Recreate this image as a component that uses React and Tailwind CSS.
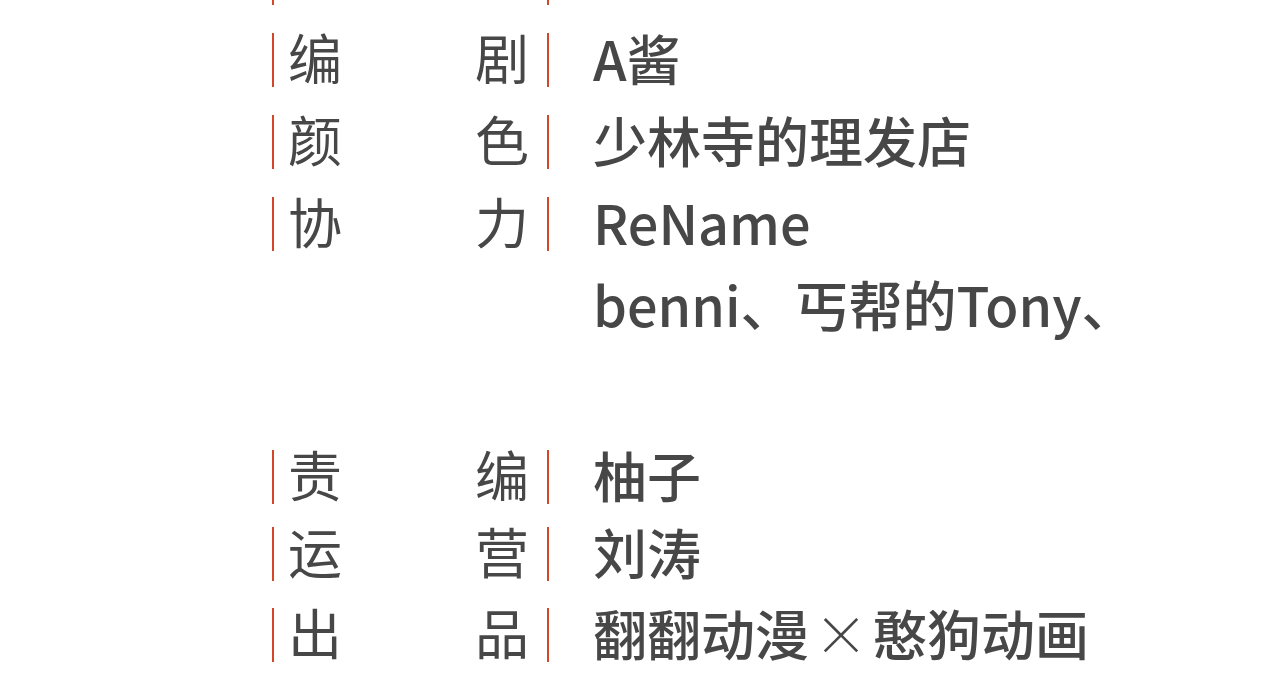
const credits = [
  { label: ['编', '剧'], lines: ['A酱'], h: 'h-[82px]' },
  { label: ['颜', '色'], lines: ['少林寺的理发店'], h: 'h-[82px]' },
  { label: ['协', '力'], lines: ['ReName', 'benni、丐帮的Tony、', ''], h: 'h-[246px]' },
];

const staff = [
  { label: ['责', '编'], lines: ['柚子'], h: 'h-[77px]' },
  { label: ['运', '营'], lines: ['刘涛'], h: 'h-[81px]' },
  {
    label: ['出', '品'],
    lines: [
      <>
        翻翻动漫<span className="font-light mx-[5px]">×</span>憨狗动画
      </>,
    ],
    h: 'h-[82px]',
  },
];

const Bar = () => <div className="w-[2px] h-[54px] bg-[#d4462a] shrink-0" />;

const Label = ({ chars }) => (
  <div className="h-[82px] flex items-center">
    <Bar />
    <div className="w-[273px] pl-[14px] pr-[18px] flex items-center justify-between">
      {chars ? (
        <>
          <span className="-mt-[8px]">{chars[0]}</span>
          <span className="-mt-[8px]">{chars[1]}</span>
        </>
      ) : null}
    </div>
    <Bar />
  </div>
);

const Row = ({ item }) => (
  <div className={`flex items-start ${item.h}`}>
    <Label chars={item.label} />
    <div className="ml-[44px] font-medium leading-[82px] -mt-[2px]">
      {item.lines.map((line, i) => (
        <div key={i} className="h-[82px] whitespace-nowrap">{line}</div>
      ))}
    </div>
  </div>
);

export default function App() {
  return (
    <div
      className="w-[1280px] h-[700px] overflow-hidden bg-white text-[#474747] text-[54px] font-normal"
      style={{ fontFamily: '"Noto Sans CJK SC", "Noto Sans", sans-serif' }}
    >
      <div className="pl-[272px] -mt-[63px]">
        {/* row cut off at the top */}
        <div className="h-[82px]">
          <Label />
        </div>

        {credits.map((item, i) => (
          <Row key={i} item={item} />
        ))}

        <div className="mt-[7px]">
          {staff.map((item, i) => (
            <Row key={i} item={item} />
          ))}
        </div>
      </div>
    </div>
  );
}
